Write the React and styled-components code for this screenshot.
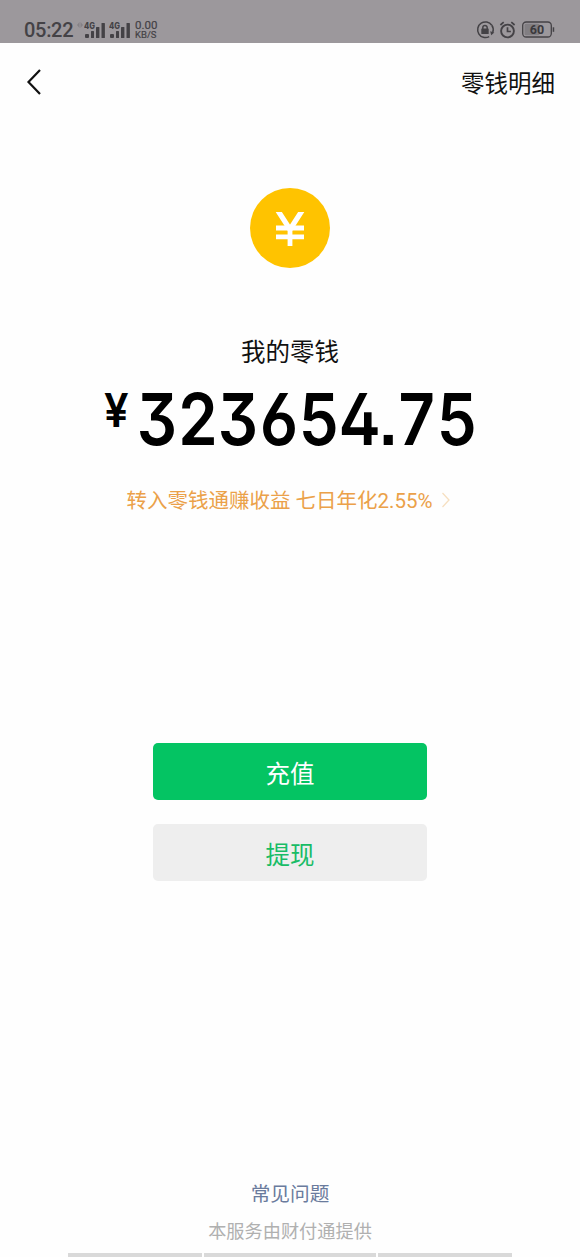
import React from 'react'
import styled, { createGlobalStyle } from 'styled-components'

const GlobalStyle = createGlobalStyle`
  body {
    margin: 0;
    background-color: #ffffff;
    font-family: Roboto, "Noto Sans CJK SC", sans-serif;
  }
`

const Screen = styled.div`
  width: 580px;
  height: 1257px;
  display: flex;
  flex-direction: column;
  align-items: center;
  overflow: hidden;
  background-color: #fefefe;
`

const StatusBar = styled.div`
  width: 100%;
  height: 43px;
  box-sizing: border-box;
  padding: 16px 25px 0 24px;
  display: flex;
  justify-content: space-between;
  background-color: #9c989c;
  color: #444246;
`

const StatusGroup = styled.div`
  display: flex;
  height: 27px;
  align-items: center;
`

const Clock = styled.span`
  width: 52px;
  padding-top: 2px;
  font-size: 20px;
  font-weight: 500;
  line-height: 27px;
  letter-spacing: -0.3px;
`

const Activity = styled.svg`
  width: 8px;
  height: 8px;
  margin-bottom: 9px;
`

const Signal = styled.svg`
  width: 22px;
  height: 18px;
  margin-right: 3px;
`

const Speed = styled.div`
  display: flex;
  flex-direction: column;
  margin-left: 1px;
  font-size: 11.5px;
  line-height: 9px;
  -webkit-text-stroke: 0.2px #444246;
`

const SpeedUnit = styled.span`
  font-size: 9.5px;
  line-height: 9px;
`

const StatusIcon = styled.svg`
  width: ${props => props.$width}px;
  height: 20px;
  margin-left: ${props => props.$gap || 0}px;
`

const NavBar = styled.div`
  width: 100%;
  height: 80px;
  box-sizing: border-box;
  padding: 0 25px 0 26px;
  display: flex;
  justify-content: space-between;
  align-items: center;
`

const BackIcon = styled.svg`
  width: 16px;
  height: 28px;
  margin-bottom: 2px;
`

const NavLink = styled.span`
  padding-top: 2px;
  font-size: 23.5px;
  line-height: 34px;
  color: #111111;
`

const Coin = styled.div`
  width: 80px;
  height: 80px;
  box-sizing: border-box;
  margin-top: 65px;
  padding-top: 2px;
  display: flex;
  justify-content: center;
  align-items: center;
  border-radius: 50%;
  background-color: #ffc300;
`

const Label = styled.div`
  margin-top: 67px;
  font-size: 24.5px;
  line-height: 36px;
  color: #111111;
`

const Amount = styled.div`
  width: 374px;
  height: 80px;
  margin-top: 8px;
  display: flex;
  align-items: flex-start;
  font-family: Inter, sans-serif;
  font-weight: 600;
  color: #000000;
`

const Currency = styled.span`
  flex: none;
  width: 33px;
  margin: 3px 0 0 1px;
  font-size: 46px;
  line-height: 56px;
  transform: scaleX(0.95);
  transform-origin: left;
`

const Digits = styled.span`
  flex: none;
  font-size: 72px;
  line-height: 80px;
  letter-spacing: -0.6px;
  font-feature-settings: "cv09", "ss01", "ss07", "tnum";
  transform: scaleX(0.88);
  transform-origin: left;
`

const Promo = styled.div`
  height: 30px;
  margin-top: 27px;
  padding-right: 3px;
  display: flex;
  align-items: center;
  font-size: 20.5px;
  line-height: 30px;
  color: #eba149;
`

const PromoArrow = styled.svg`
  width: 10px;
  height: 16px;
  margin: 0 0 2px 8px;
`

const Actions = styled.div`
  margin-top: 227px;
  display: flex;
  flex-direction: column;
  gap: 24px;
`

const Button = styled.button`
  width: 274px;
  height: 57px;
  padding: 2px 0 0;
  border: none;
  border-radius: 5px;
  font-family: inherit;
  font-size: 24.5px;
  background-color: ${props => props.$primary ? '#04c463' : '#eeeeee'};
  color: ${props => props.$primary ? '#ffffff' : '#18bc66'};
`

const Footer = styled.div`
  flex: 1;
  display: flex;
  flex-direction: column;
  justify-content: flex-end;
  align-items: center;
`

const FaqLink = styled.span`
  font-size: 19.7px;
  line-height: 30px;
  color: #6a7b9d;
`

const Provider = styled.span`
  margin: 8px 0 7px;
  font-size: 18.2px;
  line-height: 28px;
  color: #b0b0b0;
`

const BottomTabs = styled.div`
  width: 444px;
  height: 4px;
  display: grid;
  grid-template-columns: 134px 172px 134px;
  gap: 2px;
`

const TabEdge = styled.div`
  background-color: #d9d9d9;
`

function SignalIcon() {
  return (
    <Signal viewBox="0 0 22 18" fill="#444246">
      <text x="0" y="7.5" fontSize="8.5" fontWeight="800" fontFamily="Inter" textLength="11" lengthAdjust="spacingAndGlyphs">4G</text>
      <rect x="1" y="13" width="4" height="4" rx="1" />
      <rect x="7" y="10" width="3" height="7" rx="0.5" />
      <rect x="12" y="6" width="3.4" height="11" rx="0.5" />
      <rect x="17.5" y="2" width="3.4" height="15" rx="0.5" />
    </Signal>
  )
}

function App() {
  return (
    <>
      <GlobalStyle />
      <Screen>
        <StatusBar>
          <StatusGroup>
            <Clock>05:22</Clock>
            <Activity viewBox="0 0 8 8" fill="#858186">
              <path d="M1 4 3.5 1v6ZM7 4 4.5 1v6Z" />
            </Activity>
            <SignalIcon />
            <SignalIcon />
            <Speed>
              <span>0.00</span>
              <SpeedUnit>KB/S</SpeedUnit>
            </Speed>
          </StatusGroup>
          <StatusGroup>
            <StatusIcon $width={20} viewBox="0 0 20 20" fill="none" stroke="#444246">
              <path d="M13.2 16.6A7.8 7.8 0 1 1 15.8 5.2" strokeWidth="1.5" />
              <path d="M15.8 5.2a7.8 7.8 0 0 1 1 7" strokeWidth="1.5" />
              <path d="M14.2 11.2 18.3 12.4 15.2 15.2Z" fill="#444246" stroke="none" />
              <rect x="5.3" y="8.5" width="7.4" height="5.5" rx="0.6" fill="#444246" stroke="none" />
              <path d="M6.8 9.5V7.7a2.2 2.2 0 0 1 4.4 0v1.8" strokeWidth="1.5" />
            </StatusIcon>
            <StatusIcon $width={18} $gap={3} viewBox="0 0 18 20" fill="none" stroke="#444246">
              <circle cx="8.5" cy="11" r="6.4" strokeWidth="1.9" />
              <path d="M8.5 7.3v4.2h3.4M1.4 5 4.7 2.1M15.6 5 12.3 2.1" strokeWidth="1.7" />
            </StatusIcon>
            <StatusIcon $width={33} $gap={5} viewBox="0 0 33 20">
              <rect x="0.7" y="2" width="28.6" height="15" rx="3.5" fill="none" stroke="#444246" strokeWidth="1.3" />
              <rect x="2.5" y="3.8" width="15" height="11.5" rx="1.5" fill="#817e82" />
              <rect x="30.7" y="7.3" width="1.5" height="4.5" fill="#444246" />
              <text x="15" y="14" textAnchor="middle" fontSize="12.5" fontWeight="700" fill="#3b393d">60</text>
            </StatusIcon>
          </StatusGroup>
        </StatusBar>

        <NavBar>
          <BackIcon viewBox="0 0 16 28" fill="none" stroke="#111111" strokeWidth="2.2">
            <path d="M14 2 2.5 14 14 26" />
          </BackIcon>
          <NavLink>零钱明细</NavLink>
        </NavBar>

        <Coin>
          <svg width="30" height="34" viewBox="0 0 30 34" fill="none" stroke="#ffffff">
            <path d="M2.5-2 15 17.5 27.5-2" strokeWidth="5.2" />
            <path d="M1 16h28M1 24.8h28M15 15v19" strokeWidth="4.8" />
          </svg>
        </Coin>

        <Label>我的零钱</Label>
        <Amount>
          <Currency>¥</Currency>
          <Digits>323654.75</Digits>
        </Amount>
        <Promo>
          转入零钱通赚收益 七日年化2.55%
          <PromoArrow viewBox="0 0 10 16" fill="none" stroke="#f6dfc0" strokeWidth="1.3">
            <path d="M1.5 1 8 8 1.5 15" />
          </PromoArrow>
        </Promo>

        <Actions>
          <Button $primary>充值</Button>
          <Button>提现</Button>
        </Actions>

        <Footer>
          <FaqLink>常见问题</FaqLink>
          <Provider>本服务由财付通提供</Provider>
          <BottomTabs>
            <TabEdge />
            <TabEdge />
            <TabEdge />
          </BottomTabs>
        </Footer>
      </Screen>
    </>
  )
}

export default App
